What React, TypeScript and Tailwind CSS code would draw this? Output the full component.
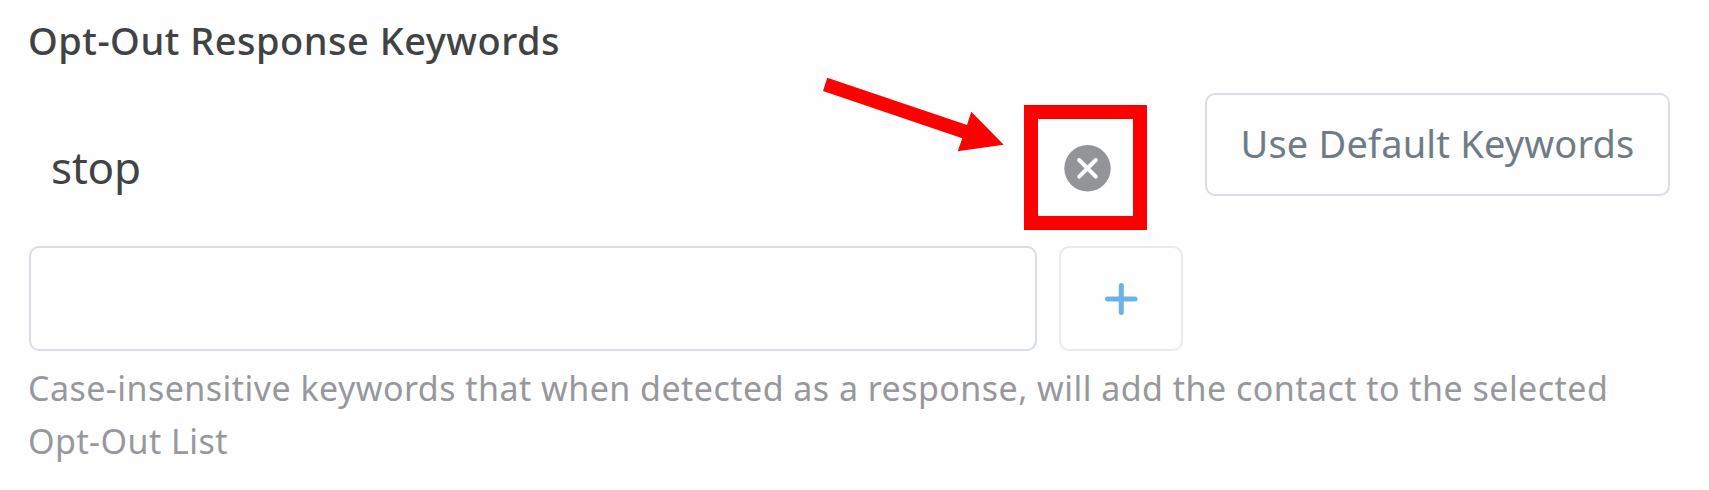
export default function App() {
  return (
    <main className="relative h-[490px] w-[1709px] overflow-hidden bg-[#fefefe] pl-[29px] pt-[12px] font-['Noto_Sans',sans-serif] text-[#414244]">
      <h1 className="-ml-px h-[56px] text-[38px] leading-[56px] font-medium tracking-[0.5px]"><span className="inline-block whitespace-nowrap">Opt-Out Response Keywords</span></h1>
      <div className="mt-[24px] flex items-start">
        <section className="w-[1154px]">
          <div className="flex h-[154px] items-center justify-between pb-[2px] pl-[22px] pr-[72px]">
            <span className="pb-[2px] text-[44px] leading-[60px] tracking-[-0.2px]">stop</span>
            <button aria-label="Remove stop" className="size-[47px]">
              <svg viewBox="0 0 47 47" className="size-full"><circle cx="23.5" cy="23.3" r="23.2" fill="#939498" /><path d="M15.2 15L31.8 31.6M31.8 15L15.2 31.6" stroke="white" strokeWidth="4" strokeLinecap="round" /></svg>
            </button>
          </div>
          <div className="flex gap-[22px]">
            <input aria-label="Keyword" className="h-[105px] w-[1008px] rounded-[10px] border-2 border-[#d8dee3] outline-none" />
            <button aria-label="Add keyword" className="flex h-[105px] w-[124px] items-center justify-center rounded-[10px] border-2 border-[#e8eaee]">
              <svg viewBox="0 0 34 34" className="size-[34px]"><path d="M17.3 3.5V30.5M3.5 17H31" stroke="#6cb2e8" strokeWidth="5" strokeLinecap="round" /></svg>
            </button>
          </div>
        </section>
        <button className="mt-px ml-[22px] h-[103px] w-[465px] rounded-[10px] border-2 border-[#d8dee3] pb-[2px] text-[38px] tracking-[0.16px] text-[#6f7c87]"><span className="whitespace-nowrap">Use Default Keywords</span></button>
      </div>
      <p className="mt-[11px] -ml-px text-[34px] leading-[53px] tracking-[0.46px] text-[#97989c]"><span className="whitespace-nowrap">Case-insensitive keywords that when detected as a response, will add the contact to the selected</span><br />Opt-Out List</p>
      <svg viewBox="0 0 340 170" className="pointer-events-none absolute top-[70px] left-[815px] h-[170px] w-[340px]"><path d="M12.3 7.7L152 55L156.3 41.7L188.7 74.7L142.7 81.3L147.3 68.3L8 21Z" fill="#f00" /><rect x="216" y="42" width="109" height="111" fill="none" stroke="#f00" strokeWidth="14" /></svg>
    </main>
  );
}
